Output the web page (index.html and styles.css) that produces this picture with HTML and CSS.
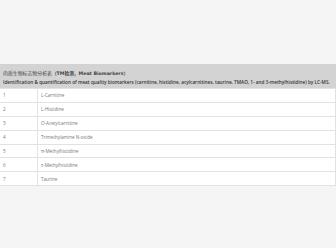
FILE: index.html
```html
<!DOCTYPE html>
<html lang="zh">
<head>
<meta charset="utf-8">
<link rel="stylesheet" href="styles.css">
</head>
<body>
<div class="page">
<table class="bio">
<thead>
<tr><th colspan="2" class="cn">肉质生物标志物分析表<span class="lat">（TM检测，Meat Biomarkers）</span></th></tr>
<tr><th colspan="2" class="en">Identification &amp; quantification of meat quality biomarkers (carnitine, histidine, acylcarnitines, taurine, TMAO, 1- and 3-methylhistidine) by LC-MS.</th></tr>
</thead>
<tbody>
<tr><td class="num">1</td><td>L-Carnitine</td></tr>
<tr><td class="num">2</td><td>L-Histidine</td></tr>
<tr><td class="num">3</td><td>O-Acetylcarnitine</td></tr>
<tr><td class="num">4</td><td>Trimethylamine N-oxide</td></tr>
<tr><td class="num">5</td><td>π-Methylhistidine</td></tr>
<tr><td class="num">6</td><td>τ-Methylhistidine</td></tr>
<tr><td class="num">7</td><td>Taurine</td></tr>
</tbody>
</table>
</div>
</body>
</html>
```
FILE: styles.css
```css
html, body {
  margin: 0;
  padding: 0;
  background: #f5f5f5;
}
.page {
  padding-top: 64px;
  width: 336px;
}
.bio {
  width: 336px;
  border-collapse: collapse;
  font-family: "Open Sans", "Noto Sans CJK SC", sans-serif;
  font-size: 4.6px;
  background: #ffffff;
}
.bio th {
  background: #d3d3d3;
  color: #444;
  text-align: left;
  padding: 0 3px;
  font-weight: normal;
  white-space: nowrap;
}
.bio th.cn {
  height: 12px;
  padding-top: 2px;
  font-size: 4.9px;
  vertical-align: middle;
}
.bio th.cn .lat {
  font-family: "DejaVu Sans", "Noto Sans CJK SC", sans-serif;
  font-weight: bold;
  font-size: 4.7px;
}
.bio th.en {
  height: 9px;
  font-size: 4.7px;
  font-weight: 600;
  color: #333;
  vertical-align: top;
  padding-top: 1px;
}
.bio td {
  height: 12.9px;
  padding: 0 3px;
  border: 1px solid #e2e2e2;
  border-left: none;
  color: #777;
  vertical-align: middle;
}
.bio td.num {
  width: 31px;
}
.bio tr td:last-child {
  border-right: 1px solid #e2e2e2;
}
```
